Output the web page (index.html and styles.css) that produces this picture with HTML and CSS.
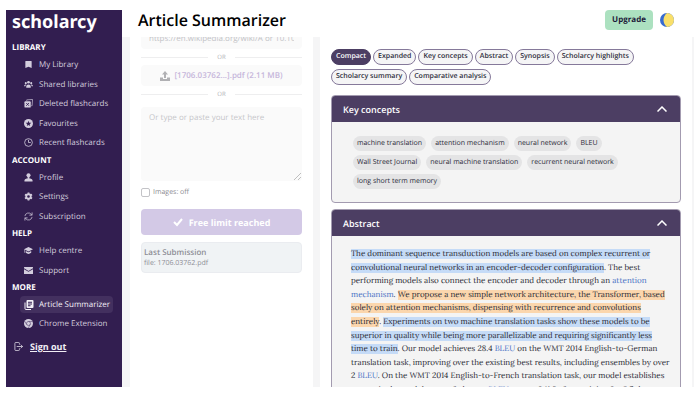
FILE: index.html
```html
<!DOCTYPE html>
<html lang="en">
<head>
<meta charset="utf-8">
<title>Article Summarizer</title>
<link rel="stylesheet" href="styles.css">
</head>
<body>
<div class="app">
  <aside class="sidebar">
    <div class="logo">scholarcy</div>
    <nav>
      <h2>Library</h2>
      <ul>
        <li><a href="#"><svg viewBox="0 0 20 20"><path fill="currentColor" d="M4 2h12q1 0 1 1v15l-7-3-7 3V3q0-1 1-1z"/></svg>My Library</a></li>
        <li><a href="#"><svg viewBox="0 0 20 20"><g fill="currentColor"><circle cx="10" cy="5" r="3"/><circle cx="4" cy="7" r="2.3"/><circle cx="16" cy="7" r="2.3"/><path d="M5 17v-3q0-4 5-4t5 4v3zM0 14q0-4 4-4l1 .3q-2 1.700-2 3.700zM20 14q0-4-4-4l-1 .3q2 1.700 2 3.700z"/></g></svg>Shared libraries</a></li>
        <li><a href="#"><svg viewBox="0 0 20 20"><path fill="none" stroke="currentColor" stroke-width="1.500" d="M6 4V2l13-1-1 14h-2"/><rect x="1" y="5" width="14" height="14" rx="2" fill="currentColor"/><path class="cut" d="M5 9l6 6M11 9l-6 6"/></svg>Deleted flashcards</a></li>
        <li><a href="#"><svg viewBox="0 0 20 20"><circle cx="10" cy="10" r="10" fill="currentColor"/><path class="hole" d="M10 4l1.700 4.200 4.500.3-3.500 2.900 1.100 4.400-3.800-2.400-3.800 2.400 1.100-4.400-3.500-2.900 4.500-.3z"/></svg>Favourites</a></li>
        <li><a href="#"><svg viewBox="0 0 20 20"><g fill="none" stroke="currentColor" stroke-width="1.800"><circle cx="10" cy="10" r="8.600"/><path d="M10 4v6h5"/></g></svg>Recent flashcards</a></li>
      </ul>
      <h2>Account</h2>
      <ul>
        <li><a href="#"><svg viewBox="0 0 20 20"><g fill="currentColor"><circle cx="10" cy="5" r="4.500"/><path d="M8 8h4v4h2q5 1 5 4v3H1v-3q0-3 5-4h2z"/></g></svg>Profile</a></li>
        <li><a href="#"><svg viewBox="0 0 20 20"><g fill="none" stroke="currentColor"><circle cx="10" cy="10" r="5" stroke-width="4"/><path stroke-width="4" d="M10 1v3M10 16v3M2.200 5.500l2.600 1.500M15.200 13l2.600 1.500M2.200 14.500L4.800 13M15.200 7l2.600-1.500"/></g></svg>Settings</a></li>
        <li><a href="#"><svg viewBox="0 0 20 20"><g fill="none" stroke="currentColor" stroke-width="1.600"><path d="M2 9a8 8 0 0 1 14-4l2 2M18 1v6h-6M18 11a8 8 0 0 1-14 4l-2-2M2 19v-6h6"/></g></svg>Subscription</a></li>
      </ul>
      <h2>Help</h2>
      <ul>
        <li><a href="#"><svg viewBox="0 0 20 20"><g fill="currentColor"><path d="M10 2l10 5-10 5L0 7z"/><path d="M4 11l6 3 6-3v4q-6 5-12 0zM1 8h1.500v7H1z"/></g></svg>Help centre</a></li>
        <li><a href="#"><svg viewBox="0 0 20 20"><g fill="currentColor"><path d="M0 3q0-1 1-1h18q1 0 1 1v2l-10 6L0 5z"/><path d="M0 7l10 6 10-6v10q0 1-1 1H1q-1 0-1-1z"/></g></svg>Support</a></li>
      </ul>
      <h2>More</h2>
      <ul>
        <li><a href="#" class="active"><svg viewBox="0 0 20 20"><path fill="none" stroke="currentColor" stroke-width="2" d="M2 5v12q0 2 2 2h10"/><rect x="5" y="0" width="14" height="16" rx="2" fill="currentColor"/><path class="cut" d="M8 4.500h8M8 8h8M8 11.500h5"/></svg>Article Summarizer</a></li>
        <li><a href="#"><svg viewBox="0 0 20 20"><circle cx="10" cy="10" r="10" fill="currentColor"/><path class="cut thin" d="M10 5.500h9M6 12.200L1.600 5M13.800 12.200L9.500 20"/><circle class="cut thin" cx="10" cy="10" r="4.500"/></svg>Chrome Extension</a></li>
      </ul>
    </nav>
    <a href="#" class="signout"><svg viewBox="0 0 20 20"><path fill="none" stroke="currentColor" stroke-width="1.600" d="M12 6V3q0-2-2-2H4Q2 1 2 3v14q0 2 2 2h6q2 0 2-2v-3M6 10h13M15 6l4 4-4 4"/></svg><span>Sign out</span></a>
  </aside>

  <div class="main">
    <header class="topbar">
      <h1>Article Summarizer</h1>
      <button class="upgrade">Upgrade</button>
      <button class="theme" aria-label="Toggle theme"><svg viewBox="0 0 28 28"><circle cx="14" cy="14" r="14" fill="#376bd0"/><path fill="#f9df6a" d="M14 0a14 14 0 0 1 0 28Q7 22 7 14T14 0z"/></svg></button>
    </header>
    <div class="columns">
      <form class="panel source">
        <input class="url" type="text" aria-label="Article URL" placeholder="https://en.wikipedia.org/wiki/A or 10.1016/j.cell">
        <div class="or">OR</div>
        <button type="button" class="file"><svg viewBox="0 0 20 20"><path d="M10 0l6 7h-4v7H8V7H4zM0 13h6v3h8v-3h6v7H0z"/></svg>[1706.03762...].pdf (2.11 MB)</button>
        <div class="or">OR</div>
        <textarea aria-label="Article text" placeholder="Or type or paste your text here"></textarea>
        <label class="images"><input type="checkbox">Images: off</label>
        <button type="button" class="submit"><svg viewBox="0 0 20 20"><path d="M2 10l6 6L18 4"/></svg>Free limit reached</button>
        <div class="last"><strong>Last Submission</strong><span>file: 1706.03762.pdf</span></div>
      </form>
      <main class="panel summary">
        <div class="tabs">
          <button class="selected">Compact</button><button>Expanded</button><button>Key concepts</button><button>Abstract</button><button>Synopsis</button><button>Scholarcy highlights</button><button>Scholarcy summary</button><button>Comparative analysis</button>
        </div>
        <section class="card">
          <h2><button>Key concepts<svg viewBox="0 0 20 12"><path d="M1 11l9-9 9 9"/></svg></button></h2>
          <div class="tags">
            <span>machine translation</span><span>attention mechanism</span><span>neural network</span><span>BLEU</span><span>Wall Street Journal</span><span>neural machine translation</span><span>recurrent neural network</span><span>long short term memory</span>
          </div>
        </section>
        <section class="card">
          <h2><button>Abstract<svg viewBox="0 0 20 12"><path d="M1 11l9-9 9 9"/></svg></button></h2>
          <p class="abstract"><mark>The dominant sequence transduction models are based on complex recurrent or<br>convolutional neural networks in an encoder-decoder configuration</mark>. The best<br>performing models also connect the encoder and decoder through an <a href="#">attention<br>mechanism</a>. <mark class="key">We propose a new simple network architecture, the Transformer, based<br>solely on attention mechanisms, dispensing with recurrence and convolutions<br>entirely</mark>. <mark>Experiments on two machine translation tasks show these models to be<br>superior in quality while being more parallelizable and requiring significantly less<br>time to train</mark>. Our model achieves 28.4 <a href="#">BLEU</a> on the WMT 2014 English-to-German<br>translation task, improving over the existing best results, including ensembles by over<br>2 <a href="#">BLEU</a>. On the WMT 2014 English-to-French translation task, our model establishes<br>a new single-model state-of-the-art <a href="#">BLEU</a> score of 41.8 after training for 3.5 days on</p>
        </section>
      </main>
    </div>
  </div>
</div>
</body>
</html>
```
FILE: styles.css
```css
* { box-sizing: border-box; }
body {
  margin: 0;
  background: #fff;
  color: #2c2c3a;
  font-family: "Open Sans", "Noto Sans", sans-serif;
  font-size: 8px;
  text-rendering: geometricPrecision;
}
button, input, textarea { font: inherit; color: inherit; border: 0; margin: 0; text-rendering: inherit; }
button { cursor: pointer; }
h1, h2, ul, p { margin: 0; padding: 0; font-size: inherit; }
a { text-decoration: none; }
.app {
  display: grid;
  grid-template-columns: 116px 1fr;
  height: 100vh;
  padding: 10px 6px 13px;
}

.sidebar { background: #321e50; color: #d3cddd; overflow: hidden; padding: 0 9px 0 6px; }
.logo { font-family: "Noto Sans", sans-serif; font-size: 18px; line-height: 24px; font-weight: 700; color: #fff; margin-bottom: 7px; }
.sidebar h2 { color: #fff; font-weight: 700; text-transform: uppercase; line-height: 14px; }
.sidebar ul { list-style: none; padding-left: 8px; margin-bottom: 1px; }
.sidebar li { line-height: 2.44; }
.sidebar li a { display: flex; align-items: center; gap: 6px; padding-left: 4px; color: inherit; border-radius: 4px; white-space: nowrap; }
.sidebar svg { width: 9px; height: 9px; flex: none; }
.sidebar li .active { background: #43305f; color: #f4f1f8; line-height: 17px; margin: 1px 0; }
.sidebar li .active svg { width: 10px; height: 10px; margin-right: -1px; }
.cut { fill: none; stroke: #321e50; stroke-width: 2; }
.thin { stroke-width: 1; }
.hole { fill: #321e50; }
.signout { display: flex; align-items: center; gap: 7px; padding-left: 2px; margin-top: 5px; color: #f1eef5; font-size: 9px; font-weight: 700; line-height: 16px; }
.signout span { text-decoration: underline; }

.main { display: flex; flex-direction: column; min-width: 0; min-height: 0; }
.topbar { display: flex; align-items: center; height: 27px; flex: none; padding: 0 20px 7px 16px; gap: 7px; z-index: 1; background: #fff; }
h1 { flex: 1; color: #000; font-size: 16px; font-weight: 600; line-height: 20px; }
.upgrade { background: #ace1c0; color: #1d1b3a; font-weight: 700; border-radius: 4px; padding: 0 7px; line-height: 20px; }
.theme { background: none; padding: 0; display: flex; }
.theme svg { width: 14px; height: 14px; }
.columns { flex: 1; min-height: 0; overflow: hidden; display: grid; grid-template-columns: 183px 1fr; gap: 7px; padding: 0 2px 0 8px; background: #f5f5f6; }
.panel { background: #fff; overflow: hidden; min-width: 0; }

.source { display: flex; flex-direction: column; padding: 0 11px; }
.source > * { flex: none; }
.source ::placeholder { color: #c3c3c7; opacity: 1; }
.url { width: 100%; height: 22px; margin-top: -10px; padding: 0 8px; background: #fafafa; border-radius: 4px; }
.or { display: flex; align-items: center; gap: 9px; height: 16px; font-size: 6px; color: #b4b4b8; }
.or::before, .or::after { content: ""; flex: 1; border-top: 1px solid #eeeeef; }
.file { display: flex; align-items: center; justify-content: center; gap: 4px; height: 21px; background: #fafafa; border-radius: 4px; color: #c6b6da; font-weight: 600; }
.file svg { width: 10px; height: 10px; fill: #b0b0b3; }
textarea { height: 74px; margin-top: 5px; padding: 5px 8px; background: #f3f3f3; border-radius: 4px; resize: vertical; opacity: .4; }
.source textarea::placeholder { color: #6f6f78; }
.images { display: flex; align-items: center; gap: 3px; margin-top: 7px; height: 9px; font-size: 7px; color: #8c8c92; }
.images input { appearance: none; width: 9px; height: 9px; border: 1px solid #c3c3c7; border-radius: 2px; }
.submit { display: flex; align-items: center; justify-content: center; gap: 6px; height: 26px; margin-top: 12px; background: #d3c9e6; color: #fff; font-size: 9px; font-weight: 700; border-radius: 4px; }
.submit svg { width: 10px; height: 10px; fill: none; stroke: #fff; stroke-width: 4; }
.last { display: flex; flex-direction: column; margin-top: 7px; padding: 4px 2px 3px; background: #f0f3f5; border: 1px solid #eaecf0; border-radius: 4px; color: #8e8e96; font-size: 7px; line-height: 11px; }
.last strong { font-size: 8px; font-weight: 600; }

.summary { padding: 12px 11px 0; }
.tabs { display: flex; flex-wrap: wrap; gap: 4px 2px; margin-bottom: 10px; }
.tabs button { height: 16px; padding: 0 4px; border: 1px solid #85799a; border-radius: 8px; background: #f5f5f6; font-size: 7px; font-weight: 600; line-height: 14px; }
.tabs .selected { background: #4c3e63; border-color: #4c3e63; color: #fff; }
.card { border: 1px solid #a39bb0; border-radius: 4px; background: #f4f4f4; overflow: hidden; margin-bottom: 6px; }
.card h2 button { display: flex; justify-content: space-between; align-items: center; width: 100%; height: 26px; padding: 0 13px 0 11px; background: #4c3e63; color: #fff; font-size: 9px; font-weight: 600; }
.card svg { width: 10px; height: 6px; fill: none; stroke: #fff; stroke-width: 3; }
.tags { display: flex; flex-wrap: wrap; gap: 4px 5px; padding: 14px 50px 13px 21px; }
.tags span { height: 15px; padding: 0 4px; border-radius: 8px; background: #e4e4e5; font-size: 7px; line-height: 15px; }
.abstract { padding: 12px 19px; font-family: Lora, "Liberation Serif", serif; font-size: 8px; line-height: 1.7; white-space: nowrap; color: #2c2c36; }
mark { background: #c5dbf7; color: inherit; }
mark.key { background: #fbd6ad; }
.abstract a { color: #4a72c4; }
```
